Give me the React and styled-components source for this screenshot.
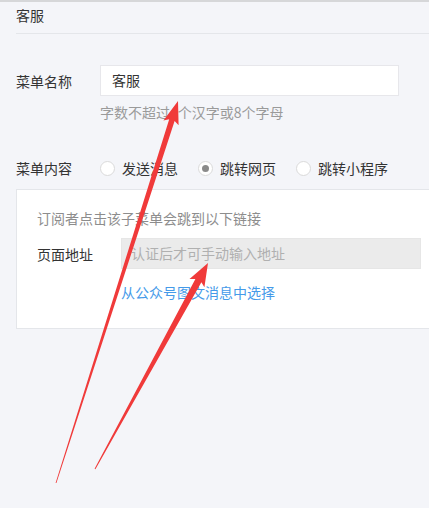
import React from "react";
import styled, { createGlobalStyle } from "styled-components";

const GlobalStyle = createGlobalStyle`
  html, body {
    margin: 0;
    padding: 0;
    background: #f4f5f9;
  }
  body {
    font-family: "Noto Sans CJK SC", "Noto Sans", sans-serif;
    color: #333;
  }
`;

const Page = styled.div`
  position: relative;
  width: 429px;
  height: 508px;
  overflow: hidden;
  box-sizing: border-box;
  border-top: 2px solid #d6d7d9;
  padding-left: 16px;
  font-size: 14px;
`;

const Header = styled.div`
  height: 31px;
  line-height: 26px;
  border-bottom: 1px solid #e4e6ea;
  width: 440px;
`;

const Row = styled.div`
  display: flex;
  align-items: center;
  margin-top: ${(p) => p.$top || 0}px;
`;

const Label = styled.div`
  width: ${(p) => p.$w || 84}px;
  flex-shrink: 0;
  color: #333;
`;

const TextInput = styled.div`
  box-sizing: border-box;
  width: ${(p) => p.$w}px;
  height: 31px;
  line-height: 29px;
  padding-left: ${(p) => (p.$disabled ? 9 : 11)}px;
  border: 1px solid ${(p) => (p.$disabled ? "#e6e6e6" : "#e7e7eb")};
  background: ${(p) => (p.$disabled ? "#ebebeb" : "#fff")};
  color: ${(p) => (p.$disabled ? "#b0b0b0" : "#333")};
`;

const Hint = styled.div`
  margin: ${(p) => p.$top || 0}px 0 0 ${(p) => p.$left || 0}px;
  color: ${(p) => p.$color || "#9a9a9a"};
  font-size: 14px;
  line-height: 20px;
`;

const Radio = styled.label`
  display: flex;
  align-items: center;
  margin-right: 20px;
  color: #333;
`;

const Circle = styled.span`
  box-sizing: border-box;
  width: 15px;
  height: 15px;
  border-radius: 50%;
  border: 1px solid #dadada;
  background: #fff;
  margin-right: 7px;
  display: flex;
  align-items: center;
  justify-content: center;

  &::after {
    content: "";
    width: 7px;
    height: 7px;
    border-radius: 50%;
    background: ${(p) => (p.$on ? "#8a8a8a" : "transparent")};
  }
`;

const Box = styled.div`
  box-sizing: border-box;
  margin-top: 11px;
  width: 440px;
  height: 140px;
  background: #fff;
  border: 1px solid #e4e6ea;
  padding: 18px 0 0 20px;
`;

const Link = styled.div`
  margin: 13px 0 0 84px;
  color: #459ae9;
  line-height: 20px;
`;

const Overlay = styled.svg`
  position: absolute;
  left: 0;
  top: 0;
  pointer-events: none;
`;

// tapered annotation arrow, thin at the tail, wider toward the head
const arrowPoints = (tail, tip, headLen, headHalf, shaftHalf, tailHalf) => {
  const dx = tip[0] - tail[0];
  const dy = tip[1] - tail[1];
  const len = Math.hypot(dx, dy);
  const u = [dx / len, dy / len];
  const n = [-u[1], u[0]];
  const base = [tip[0] - u[0] * headLen, tip[1] - u[1] * headLen];
  const back = [base[0] - u[0] * 3, base[1] - u[1] * 3];
  const at = (p, k) => [p[0] + n[0] * k, p[1] + n[1] * k];
  const pts = [
    at(tail, tailHalf),
    at(base, shaftHalf),
    at(back, headHalf),
    tip,
    at(back, -headHalf),
    at(base, -shaftHalf),
    at(tail, -tailHalf),
  ];
  return pts.map((p) => p.map((v) => v.toFixed(1)).join(",")).join(" ");
};

const Arrows = () => (
  <Overlay width="429" height="508" viewBox="0 0 429 508">
    <polygon
      points={arrowPoints([56, 481], [178, 99], 20, 8, 2.8, 0.4)}
      fill="#f03a3a"
    />
    <polygon
      points={arrowPoints([95, 467], [208, 261], 20, 8.5, 3.4, 0.4)}
      fill="#f03a3a"
    />
  </Overlay>
);

const App = () => {
  return (
    <>
      <GlobalStyle />
      <Page>
        <Header>客服</Header>

        <Row $top={31}>
          <Label>菜单名称</Label>
          <TextInput $w={299}>客服</TextInput>
        </Row>
        <Hint $left={84} $top={6}>
          字数不超过4个汉字或8个字母
        </Hint>

        <Row $top={36}>
          <Label>菜单内容</Label>
          <Radio>
            <Circle />
            发送消息
          </Radio>
          <Radio>
            <Circle $on />
            跳转网页
          </Radio>
          <Radio>
            <Circle />
            跳转小程序
          </Radio>
        </Row>

        <Box>
          <Hint $color="#8d8d8d">订阅者点击该子菜单会跳到以下链接</Hint>
          <Row $top={10}>
            <Label>页面地址</Label>
            <TextInput $w={300} $disabled>
              认证后才可手动输入地址
            </TextInput>
          </Row>
          <Link>从公众号图文消息中选择</Link>
        </Box>

        <Arrows />
      </Page>
    </>
  );
};

export default App;
